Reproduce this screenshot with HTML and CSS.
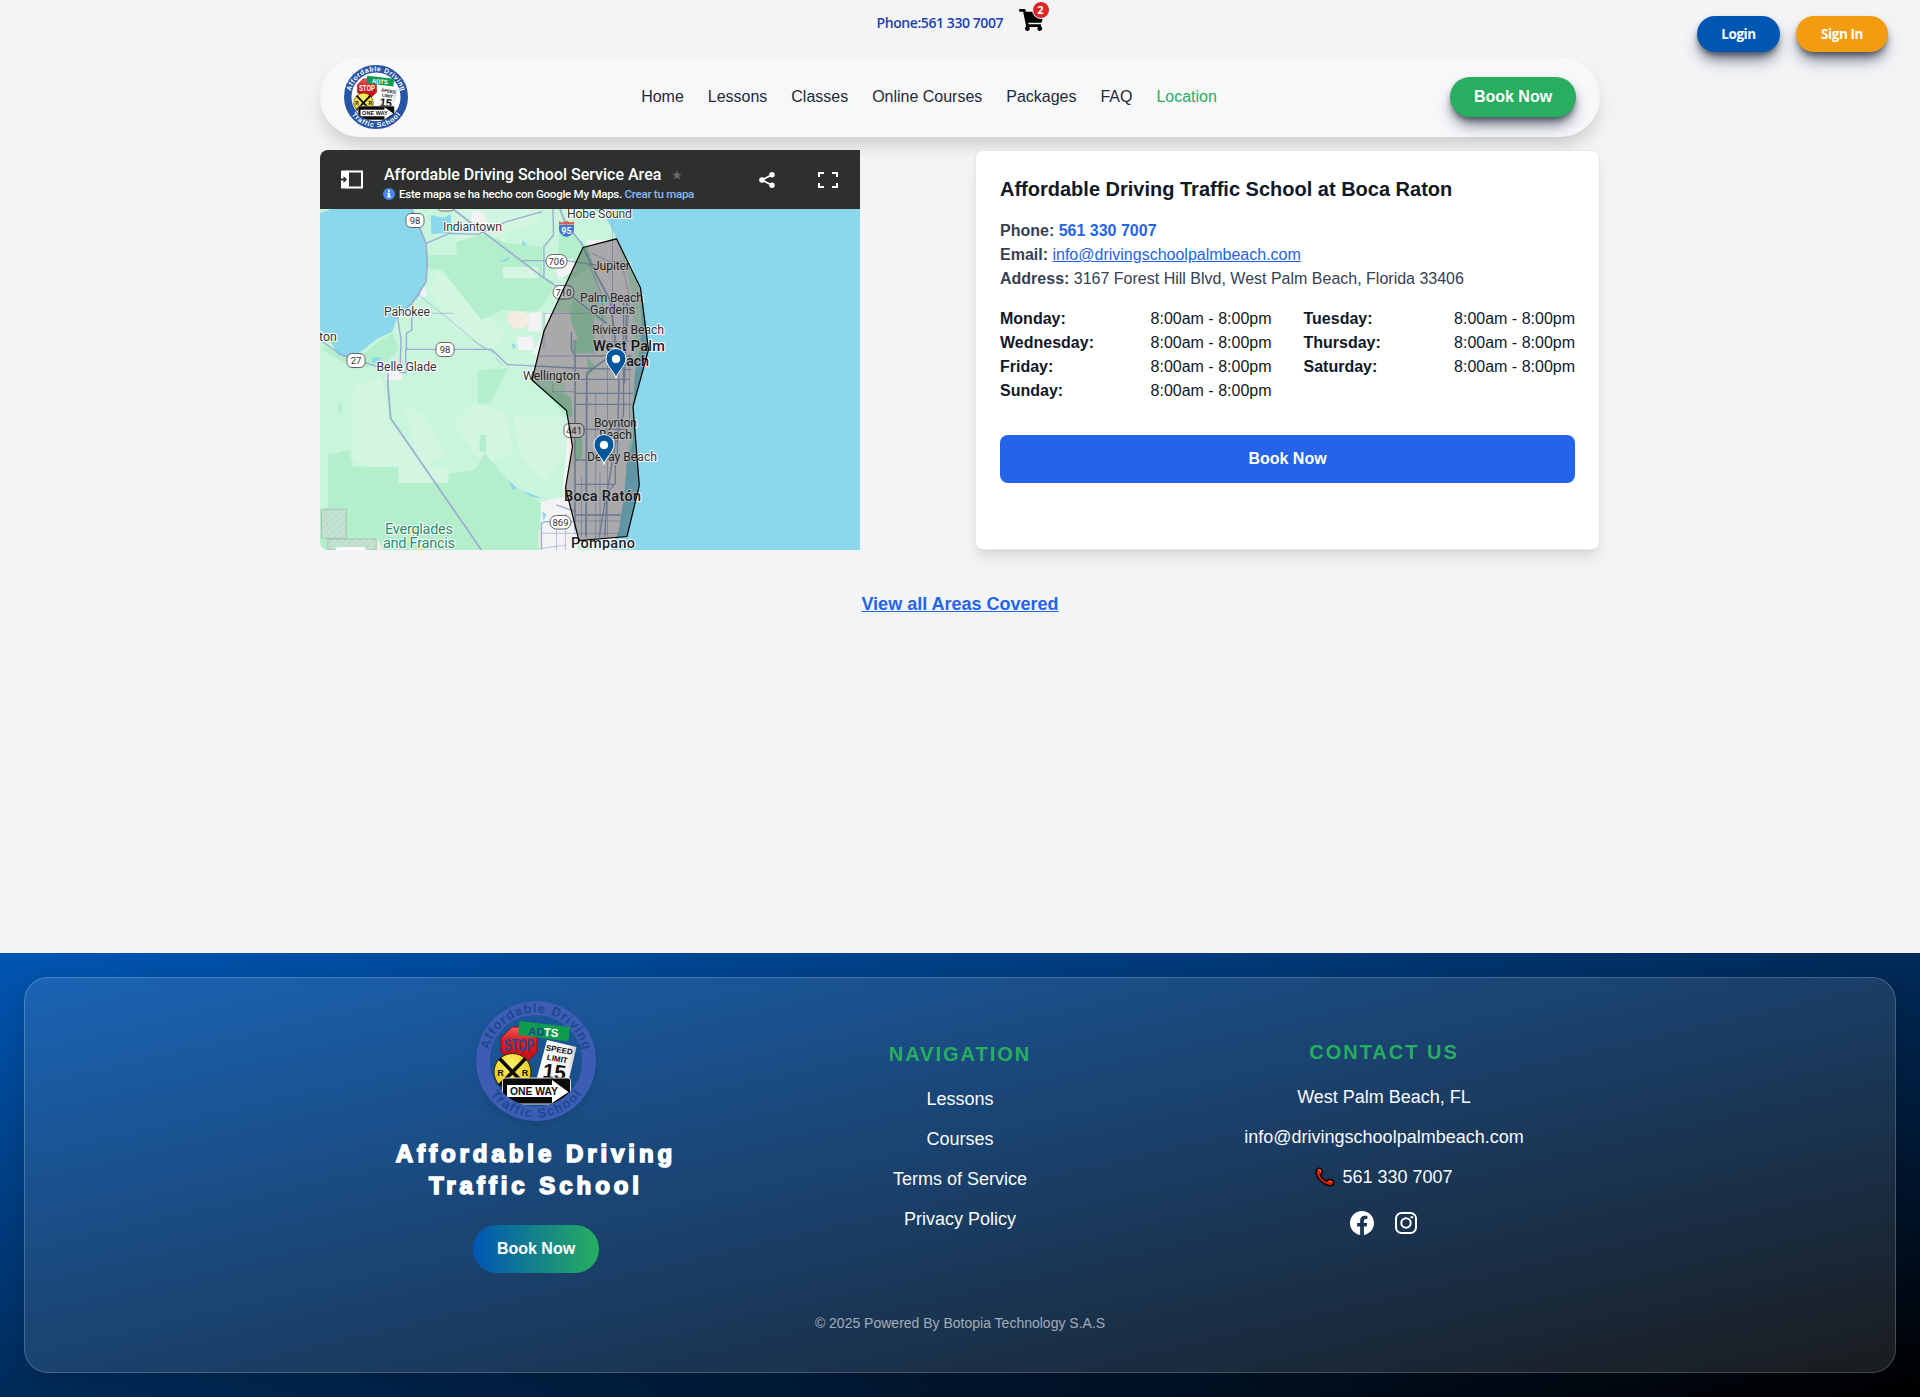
FILE: index.html
```html
<!DOCTYPE html>
<html lang="en">
<head>
<meta charset="utf-8">
<title>Affordable Driving Traffic School</title>
<link rel="stylesheet" href="styles.css">
</head>
<body>
<svg class="defs" aria-hidden="true">
  <defs>
    <linearGradient id="stopRed" x1="0" y1="0" x2="0" y2="1"><stop offset="0" stop-color="#f4585c"/><stop offset=".4" stop-color="#dc1a22"/><stop offset="1" stop-color="#b80f18"/></linearGradient>
    <linearGradient id="signWhite" x1="0" y1="0" x2="1" y2="0"><stop offset="0" stop-color="#fff"/><stop offset=".8" stop-color="#f3f3f3"/><stop offset="1" stop-color="#c9c9c9"/></linearGradient>
    <radialGradient id="rail" cx=".45" cy=".3" r=".8"><stop offset="0" stop-color="#fff36a"/><stop offset="1" stop-color="#e3bd00"/></radialGradient>
    <path id="arcTop" d="M11.500 60a48.500 48.500 0 0 1 97 0"/>
    <path id="arcBottom" d="M3.500 60a56.500 56.500 0 0 0 113 0"/>
    <symbol id="school" viewBox="0 0 120 120">
      <circle class="logo-face" cx="60" cy="60" r="48"/>
      <circle class="logo-ring" cx="60" cy="60" r="53" fill="none" stroke-width="14"/>
      <path d="M36 26h14l11 11v14l-11 11H36L25 51V37z" fill="url(#stopRed)" stroke="#8f1117"/>
      <text class="logo-stop" x="43" y="49.500" text-anchor="middle" textLength="30" lengthAdjust="spacingAndGlyphs">STOP</text>
      <path d="M43.500 20l50.500 6-1.500 14.500-50.500-6.500z" fill="#0f9b4e"/>
      <g class="logo-adts" transform="rotate(4 67 34)"><text class="logo-ad" x="52" y="35">AD</text><text x="67.500" y="35">TS</text></g>
      <path d="M71 39l29.500 7-9 38H59z" fill="url(#signWhite)"/>
      <g class="logo-speed"><text x="83" y="51.500" text-anchor="middle" transform="rotate(10 83 51)">SPEED</text><text x="81" y="60.500" text-anchor="middle" transform="rotate(10 81 60)">LIMIT</text><text class="logo-limit" x="77.500" y="78" text-anchor="middle" transform="rotate(7 77 78)">15</text></g>
      <circle cx="36.500" cy="71" r="18.500" fill="url(#rail)" stroke="#2a2508"/>
      <path d="M23.500 57.500l26 27M49.500 57.500l-26 27" stroke="#0c0c0c" stroke-width="3.600"/>
      <g class="logo-rr"><text x="24.500" y="74.500" text-anchor="middle">R</text><text x="49" y="74.500" text-anchor="middle">R</text></g>
      <path d="M29 77h63q2.500 0 2.500 2.500V97l-4.500 6H33l-6.500-6V79.500Q26.500 77 29 77z" fill="#0b0b0b" stroke="#ddd"/>
      <path d="M31 84h45v-5l16.500 12L76 102v-6H31z" fill="#fff"/>
      <text class="logo-oneway" x="34" y="93.800" textLength="48" lengthAdjust="spacingAndGlyphs">ONE WAY</text>
      <path d="M12 92a57 57 0 0 0 96 0l-9-8a46 46 0 0 1-78 0z" class="logo-band"/>
      <text class="logo-arc"><textPath href="#arcTop" startOffset="50%" text-anchor="middle" textLength="130">Affordable Driving</textPath></text>
      <text class="logo-arc"><textPath href="#arcBottom" startOffset="50%" text-anchor="middle" textLength="106">Traffic School</textPath></text>
    </symbol>
  </defs>
</svg>

<header class="topbar">
  <div class="topbar-center">
    <a class="topbar-phone">Phone:561 330 7007</a>
    <a class="cart">
      <svg viewBox="0 0 576 512" width="25" height="22"><path d="M528.120 301.320l47.270-208C578.810 78.310 567.390 64 552 64H159.210l-9.170-44.800C147.760 8.020 137.930 0 126.530 0H24C10.750 0 0 10.750 0 24v16c0 13.250 10.750 24 24 24h69.880l70.250 343.430C147.330 417.100 136 435.220 136 456c0 30.930 25.070 56 56 56s56-25.070 56-56c0-15.670-6.450-29.830-16.820-40h209.650C430.450 426.170 424 440.330 424 456c0 30.930 25.070 56 56 56s56-25.070 56-56c0-22.170-12.890-41.330-31.580-50.400l5.520-24.280c3.410-15.010-8-29.320-23.400-29.320H218.120l-6.540-32h293.140c11.200 0 20.920-7.750 23.400-18.680z"/></svg>
      <span class="cart-badge">2</span>
    </a>
  </div>
  <div class="topbar-auth">
    <button class="pill pill-blue">Login</button>
    <button class="pill pill-orange">Sign In</button>
  </div>
</header>

<nav class="navbar">
  <svg class="logo logo-small" width="64" height="64"><use href="#school"/></svg>
  <ul class="menu">
    <li>Home</li><li>Lessons</li><li>Classes</li><li>Online Courses</li><li>Packages</li><li>FAQ</li><li class="active">Location</li>
  </ul>
  <button class="book">Book Now</button>
</nav>

<main class="main">
  <div class="location">
    <section class="map">
      <div class="map-bar">
        <svg class="map-panel" width="22" height="19" viewBox="0 0 22 19"><path d="M0 1.500Q0 .5 1 .5h6v18H1q-1 0-1-1z" fill="#fff"/><path d="M7 1.500h14v16H7z" fill="none" stroke="#fff" stroke-width="2"/><path d="M0 8.500h2.500V6L6 9.500 2.500 13v-2.500H0z" fill="#2e302f"/></svg>
        <div class="map-heading">
          <div class="map-title">Affordable Driving School Service Area
            <svg width="10" height="10" viewBox="0 0 24 24"><path fill="#686a69" d="M12 17.800L19.400 23l-2.800-9 7.400-5.300h-9.100L12 0 9.100 8.700H0L7.400 14l-2.800 9z"/></svg>
          </div>
          <div class="map-note">
            <svg width="12" height="12" viewBox="0 0 12 12"><circle cx="6" cy="6" r="6" fill="#4688f1"/><path d="M5 2h2v1.700H5zM4.300 4.700H7v3.600h.8v1.200H4.200V8.300H5V5.900h-.7z" fill="#fff"/></svg>
            <span>Este mapa se ha hecho con Google My Maps. <a>Crear tu mapa</a></span>
          </div>
        </div>
        <svg class="map-share" width="16" height="16" viewBox="0 0 16 16"><path d="M13 2.800L3 8l10 5.200" fill="none" stroke="#fff" stroke-width="1.600"/><circle cx="13" cy="2.800" r="2.700" fill="#fff"/><circle cx="3" cy="8" r="2.800" fill="#fff"/><circle cx="13" cy="13.200" r="2.700" fill="#fff"/></svg>
        <svg width="20" height="16" viewBox="0 0 20 16"><path d="M1 5V1h5M14 1h5v4M19 11v4h-5M6 15H1v-4" fill="none" stroke="#fff" stroke-width="2"/></svg>
      </div>
      <svg class="map-canvas" width="540" height="341" viewBox="0 0 540 341">
        <defs><pattern id="hatch" width="20" height="20" patternUnits="userSpaceOnUse"><path d="M0 0h20v20H0z" fill="#c3e2d1"/><path d="M0 20L20 0" stroke="#a9cdb8" stroke-width="2"/></pattern></defs>
        <g transform="translate(-10 -69) scale(.35714 .33333)">
          <path class="land" d="M28 207h1512v1023H28z"/>
          <path class="pale" d="M410 207l230 0 0 40 -90 30 -20 70 -120 0zM360 390l190 190 -30 50 -110 -60 -80 -120zM120 740l80 -30 20 140 100 110 -80 60 -120 -60zM400 850l60 -60 90 30 20 120 -80 30 -50 -60zM570 830l140 0 10 100 -60 100 -70 -80zM260 790l60 40 60 110 -70 50z"/>
          <path class="forest" d="M330 345l80 0 0 -40 80 -25 60 30 100 10 0 90 35 15 -10 30 -35 60 -100 -5 -60 30 -110 -150 -45 -5zM700 260l70 50 25 65 -70 45 -30 -10 0 -80zM50 945l60 -15 10 50 130 0 -2 50 147 -30 65 -10 30 -50 70 90 85 60 0 140 -617 0 0 -120 22 -10zM470 690l85 -5 -50 105 -35 0zM35 630l0 -12 100 40 40 -40 55 -40 20 50 -40 40 -80 20zM475 885h18v50h-18zM80 788h10v32H80z"/>
          <path class="pale" d="M248 980h140v48H248zM540 380l100 0 0 35 -100 0z"/>
          <path class="town" d="M455 210l30 10 25 50 -35 10 -25 -30zM305 450l15 -10 8 25 -20 10zM612 520l35 -6 0 60 -35 0zM660 515l60 0 20 60 -60 50 -60 20 40 -80zM578 590l45 0 5 40 -45 0zM685 370l50 -15 10 35 -50 30zM648 1085l90 -20 10 165 -105 0zM213 690l45 0 0 30 -45 0z"/>
          <path class="town" d="M775 300l85 0 40 150 10 190 -5 120 -20 240 -15 230 -130 -20 -32 -165 12 -150 -8 -170 -90 -30 28 -120 40 -60 75 10 70 30 -20 -90z"/>
          <path class="sand" d="M555 520q45 -18 60 12 0 38 -40 34 -28 -14 -20 -46zM725 900l14 0 0 70 -14 20zM190 1195l15 35 -20 0zM640 1170l8 0 0 60 -8 -10z"/>
          <path class="forest" d="M735 480l60 50 0 110 -30 0 -35 -100zM735 600l60 0 0 40 -60 0zM650 740l80 30 6 60 -20 0zM740 870l22 10 0 70 -22 20zM775 650l25 30 -20 30z"/>
          <path class="water" d="M28 220L60 207H287l13 33 22 70 6 50-3 60-20 50-60 60-15 45-40 20-42 35-35 25-35-10-25-50-28-30zM338 225l35 8 22 -10 0 55 -55 5zM795 207l35 28 28 60 42 85 25 65 4 110 -7 85 -12 60 -5 100 0 100 -18 70 -8 100 -14 100 -22 60H1540V207zM595 300l12 15 -12 3zM530 365l30 -15 -8 14zM555 1020l25 25 -12 5zM590 1050l60 25 -30 -4zM565 610l12 8 -8 10zM650 1115l12 8 -8 20zM175 650l30 5 -30 15z"/>
          <path class="hatch-area" d="M32 1108h70v87H32zM50 1197h135v33H50z"/>
          <rect x="72" y="1222" width="84" height="16" rx="6" fill="#fff"/>
          <g class="road thin"><path d="M305 465L380 530 490 628M340 520h60M455 600l60 40M520 655l20 20M742 600V1185M800 760V1195M833 640V1190M847 240V600M865 640V780M895 640V850M650 520H830M655 520V625M680 730l0 25 60 0M640 648H740M790 605H910M745 1143H870M648 1180H870M648 1225l70 -10M690 1125V1230M715 1120V1230M780 370l40 100 0 130M790 340l60 30M870 360l25 110 -10 170M750 1125H870M760 1010V1190M812 1000V1195"/></g>
          <g class="road mid"><path d="M325 310L390 280l80 3 80 -38 100 -30M680 207l2 78 -27 35 0 90M595 362l125 0 140 23M245 530l10 70 -3 98 16 0 0 -70 240 0 45 46 187 10 160 5M285 490l0 80 -15 10 0 48M28 600l60 45 100 35M742 648H900M742 718H895M742 760H905M742 793H900M742 868H890M742 960H790M742 1033H850M742 1125H870M648 1230V1150l10 -5H745M732 575V630l10 15V1170M878 470V820L855 910 833 1050 825 1190M690 1095l55 20M855 975V1030l-25 30 -20 130M865 720l-5 250"/></g>
          <g class="road"><path d="M285 207l40 103 3 60 -3 55 -40 65 -40 40M218 700l0 35 8 100L480 1230M400 207L490 280 650 410 740 475 830 550M700 207l15 43 45 60 40 90 40 80 15 120 -5 40 -75 60 -2 490M888 480l-8 250"/></g>
        </g>
        <g class="labels">
          <g class="shield">
            <rect x="86" y="4.500" width="18" height="14" rx="5"/><rect x="117" y="-11" width="18" height="13" rx="5"/><rect x="226" y="45.500" width="21" height="13.500" rx="6.500"/><rect x="233" y="76.500" width="21" height="13.500" rx="6.500"/><rect x="116" y="133.500" width="18" height="14" rx="5"/><rect x="27" y="144.500" width="18" height="14" rx="5"/><rect x="244" y="214.500" width="20" height="14" rx="5"/><rect x="230" y="306.500" width="21" height="13.500" rx="6.500"/>
          </g>
          <g class="shield-text"><text x="95" y="15.300">98</text><text x="236.500" y="56">706</text><text x="243.500" y="87">710</text><text x="125" y="144.300">98</text><text x="36" y="155.300">27</text><text x="254" y="225.300">441</text><text x="240.500" y="317">869</text></g>
          <path d="M239 16h15v4q0 6-7.500 8-7.500-2-7.500-8z" fill="#3b76cf"/><path d="M239 15.500v-3l3 1 4.500-1.500 4.500 1.500 3-1v3z" fill="#d95a54"/><text class="interstate" x="246.500" y="24.500">95</text>
          <g class="place">
            <text x="247" y="8.500" textLength="65">Hobe Sound</text><text x="123" y="21.500" textLength="59">Indiantown</text><text x="64" y="106.500" textLength="46">Pahokee</text><text x="-1" y="132">ton</text><text x="56.500" y="161.500" textLength="60">Belle Glade</text><text x="273" y="60.500" textLength="37">Jupiter</text><text x="260" y="92.500" textLength="63">Palm Beach</text><text x="270" y="104.500" textLength="45">Gardens</text><text x="272" y="124.500" textLength="72">Riviera Beach</text><text x="203" y="170.500" textLength="57">Wellington</text><text x="274" y="217.500" textLength="43">Boynton</text><text x="279" y="229.500" textLength="33">Beach</text><text x="267" y="251.500" textLength="70">Delray Beach</text>
          </g>
          <g class="city"><text x="273" y="142" textLength="72">West Palm</text><text x="290" y="157" textLength="39">Beach</text><text x="244" y="291.500" textLength="77">Boca Ratón</text><text x="251" y="339" textLength="64">Pompano</text></g>
          <g class="park"><text x="65" y="324.500" textLength="68">Everglades</text><text x="63" y="338.500" textLength="72">and Francis</text></g>
        </g>
        <path class="zone" d="M263 38.500l33.500 -8.700 24 49 8 62L313 197.500l6.300 79L307 327.500l-48 4L245.500 279l7 -41.500 -6 -36L212 171l12 -49z"/>
        <g class="pin"><path d="M296 169.500c-1-7-10-12-10-20a10 10 0 0 1 20 0c0 8-9 13-10 20z"/><circle cx="296" cy="150" r="3.800"/><path d="M284 255.500c-1-7-10-12-10-20a10 10 0 0 1 20 0c0 8-9 13-10 20z"/><circle cx="284" cy="236" r="3.800"/></g>
      </svg>
    </section>

    <section class="card">
      <h2>Affordable Driving Traffic School at Boca Raton</h2>
      <div class="contact">
        <p><b>Phone:</b> <a class="tel">561 330 7007</a></p>
        <p><b>Email:</b> <a class="mail">info@drivingschoolpalmbeach.com</a></p>
        <p><b>Address:</b> 3167 Forest Hill Blvd, West Palm Beach, Florida 33406</p>
      </div>
      <div class="hours">
        <div><b>Monday:</b><span>8:00am - 8:00pm</span></div><div><b>Tuesday:</b><span>8:00am - 8:00pm</span></div>
        <div><b>Wednesday:</b><span>8:00am - 8:00pm</span></div><div><b>Thursday:</b><span>8:00am - 8:00pm</span></div>
        <div><b>Friday:</b><span>8:00am - 8:00pm</span></div><div><b>Saturday:</b><span>8:00am - 8:00pm</span></div>
        <div><b>Sunday:</b><span>8:00am - 8:00pm</span></div>
      </div>
      <button class="card-book">Book Now</button>
    </section>
  </div>
  <a class="areas">View all Areas Covered</a>
</main>

<footer class="footer">
  <div class="panel">
    <div class="columns">
      <div class="brand">
        <svg class="logo logo-large" width="120" height="120"><use href="#school"/></svg>
        <h3>Affordable Driving<br>Traffic School</h3>
        <button class="brand-book">Book Now</button>
      </div>
      <div class="links">
        <h4>NAVIGATION</h4>
        <a>Lessons</a><a>Courses</a><a>Terms of Service</a><a>Privacy Policy</a>
      </div>
      <div class="links links-contact">
        <h4>CONTACT US</h4>
        <a>West Palm Beach, FL</a><a>info@drivingschoolpalmbeach.com</a>
        <a class="footer-phone"><svg width="20" height="20" viewBox="0 0 20 20"><path d="M2.200 1.700Q4 .6 6 1.800L7.400 5.500Q7 7.300 5.400 8q1.500 4 6.500 6.200 1.300-2 3-2l3.600 1.700q.9 1.600-.5 4-4.200 2-9.400-1.400Q.7 11 1 4.500z" fill="#d81e12" stroke="#080808" stroke-width="1.500"/><path d="M3.500 3.200l1.700-.2.600 2M13.800 14.200l2.600.8" fill="none" stroke="#ff6a35" stroke-width="1.300"/></svg>561 330 7007</a>
        <div class="social">
          <svg width="24" height="24" viewBox="0 0 24 24"><path fill="#fff" d="M24 12.070C24 5.400 18.630 0 12 0S0 5.400 0 12.070C0 18.100 4.390 23.090 10.130 24v-8.440H7.080v-3.490h3.050V9.410c0-3.020 1.790-4.690 4.530-4.690 1.310 0 2.690.24 2.690.24v2.970h-1.520c-1.490 0-1.960.93-1.960 1.890v2.250h3.330l-.53 3.490h-2.800V24C19.610 23.090 24 18.100 24 12.070z"/></svg>
          <svg width="22" height="22" viewBox="0 0 22 22" fill="none" stroke="#fff" stroke-width="2"><rect x="1" y="1" width="20" height="20" rx="5.500"/><circle cx="11" cy="11" r="4.700"/><circle cx="16.800" cy="5.200" r="1.300" fill="#fff" stroke="none"/></svg>
        </div>
      </div>
    </div>
    <p class="copyright">© 2025 Powered By Botopia Technology S.A.S</p>
  </div>
</footer>
</body>
</html>
```
FILE: styles.css
```css
* { box-sizing: border-box; margin: 0; padding: 0; }
body { background: #f3f4f6; color: #111827; font: 16px/24px "Liberation Sans", Arial, sans-serif; min-height: 1397px; display: flex; flex-direction: column; }
button { border: 0; font: inherit; font-weight: 700; color: #fff; }
svg { display: block; flex: none; }
.defs { position: absolute; width: 0; height: 0; }

.topbar { height: 57px; display: grid; grid-template-columns: 1fr auto 1fr; padding: 0 32px; }
.topbar-center { grid-column: 2; display: flex; gap: 16px; align-items: flex-start; }
.topbar-phone { width: 126px; padding-top: 13px; font: 600 14px/20px "Open Sans", "Noto Sans", sans-serif; letter-spacing: -.42px; white-space: nowrap; color: #1e40af; }
.cart { position: relative; padding-top: 9px; width: 25px; }
.cart-badge { position: absolute; left: 13px; top: 1px; width: 18px; height: 18px; border-radius: 50%; border: 1px solid #fff; background: #dc2626; color: #fff; font: 700 11px/16px "Open Sans", sans-serif; text-align: center; }
.topbar-auth { display: flex; justify-content: flex-end; gap: 16px; padding-top: 16px; }
.pill { height: 36px; border-radius: 18px; font: 700 13.500px/36px "Open Sans", "Noto Sans", sans-serif; letter-spacing: -.45px; }
.pill, .book { box-shadow: 0 10px 15px -3px rgba(31, 41, 65, .65), 0 4px 6px -2px rgba(31, 41, 55, .65); }
.pill-blue { width: 83px; background: #0056b3; }
.pill-orange { width: 92px; background: #f39c12; }

.navbar { width: 1280px; height: 80px; margin: 0 auto; padding: 0 24px; display: flex; align-items: center; justify-content: space-between; border-radius: 40px; background: #f7f8fa; box-shadow: 0 10px 15px -3px rgba(0, 0, 0, .12), 0 10px 24px rgba(0, 0, 0, .05); }
.menu { display: flex; gap: 24px; list-style: none; color: #1f2937; letter-spacing: -.01px; }
.menu .active { color: #27ae60; }
.book { width: 126px; height: 40px; border-radius: 20px; background: #27ae60; }

.logo-arc { font: 700 13px "Liberation Sans", Arial, sans-serif; fill: var(--arc); }
.logo-ring { stroke: var(--ring); }
.logo-band { fill: var(--ring); }
.logo-face { fill: var(--face); }
.logo-stop { font: 700 16px "Liberation Sans", Arial, sans-serif; fill: var(--stop); }
.logo-adts { font: 700 11.500px "Liberation Sans", Arial, sans-serif; fill: #fff; }
.logo-ad { fill: var(--stop); }
.logo-speed { font: 700 8px "Liberation Sans", Arial, sans-serif; fill: #111; }
.logo-limit { font-size: 21px; }
.logo-rr { font: 700 9px "Liberation Sans", Arial, sans-serif; fill: #111; }
.logo-oneway { font: 700 10px "Liberation Sans", Arial, sans-serif; fill: #111; }
.logo-small { --arc: #fff; --ring: #2754a3; --face: #fff; --stop: #fff; }
.logo-large { --arc: #1b4a8f; --ring: #3d5db5; --face: transparent; --stop: #1d4b91; border-radius: 50%; box-shadow: 0 4px 10px rgba(0, 0, 0, .1); }

.main { flex: 1; width: 1280px; margin: 13px auto 0; display: flex; flex-direction: column; align-items: center; gap: 40px; }
.location { width: 100%; display: flex; justify-content: space-between; }
.map { width: 540px; height: 400px; border-radius: 8px 0 0 8px; overflow: hidden; }
.map-bar { height: 59px; background: #2e302f; display: flex; align-items: center; padding: 0 22px 0 21px; color: #fff; font-family: Roboto, sans-serif; }
.map-heading { margin-left: 20px; flex: 1; padding-top: 8px; }
.map-title { display: flex; align-items: center; gap: 11px; padding-left: 1px; font: 500 16px/20px Roboto, sans-serif; white-space: nowrap; }
.map-note { display: flex; align-items: center; gap: 4px; font: 500 11.500px/18px Roboto, sans-serif; letter-spacing: -.25px; white-space: nowrap; }
.map-note a { color: #8ab8f8; }
.map-share { margin-right: 43px; }
.land { fill: #c9f5dc; }
.pale { fill: #d2f6e2; }
.forest { fill: #b3efcb; }
.town { fill: #f3f3f6; }
.sand { fill: #f3ecdf; }
.water { fill: #8bd8ec; }
.hatch-area { fill: url(#hatch); stroke: #9fb9ab; stroke-width: 2; }
.road { fill: none; stroke: #9cadd0; stroke-width: 5; stroke-linejoin: round; }
.road.mid { stroke-width: 4; }
.road.thin { stroke-width: 2; }
.labels { font-family: Roboto, sans-serif; }
.place, .city, .park { paint-order: stroke; stroke: #fff; stroke-width: 2px; stroke-linejoin: round; fill: #333; }
.place { font-size: 12.300px; }
.city { font-size: 14.500px; font-weight: 500; fill: #202124; }
.park { font-size: 14.500px; fill: #258a65; }
.shield { fill: #fff; stroke: #666; }
.shield-text { font-size: 9.500px; fill: #333; text-anchor: middle; }
.interstate { font-size: 9px; font-weight: 700; fill: #fff; text-anchor: middle; }
.zone { fill: rgba(0, 0, 0, .3); stroke: #000; stroke-width: 1.200; }
.pin { fill: #01579b; stroke: #fff; stroke-width: 1; }
.pin circle { fill: #fff; }

.card { width: 625px; height: 400px; padding: 24px; border: 1px solid #e5e7eb; border-radius: 8px; background: #fff; box-shadow: 0 10px 15px -3px rgba(0, 0, 0, .1), 0 4px 6px -2px rgba(0, 0, 0, .05); }
.card h2 { font-size: 20px; line-height: 28px; margin-bottom: 16px; }
.contact { color: #374151; margin-bottom: 16px; }
.contact a { color: #2563eb; }
.tel { font-weight: 700; }
.mail { text-decoration: underline; }
.hours { display: grid; grid-template-columns: 1fr 1fr; column-gap: 32px; margin-bottom: 32px; }
.hours div { display: flex; justify-content: space-between; }
.card-book { width: 100%; height: 48px; border-radius: 8px; background: #2563eb; }
.areas { font-size: 18px; line-height: 28px; font-weight: 700; color: #2563eb; text-decoration: underline; }

.footer { height: 444px; padding: 24px; background: linear-gradient(to bottom right, #0056b3, #000); }
.panel { height: 396px; padding: 23px 0 0; border: 1px solid rgba(255, 255, 255, .2); border-radius: 24px; background: rgba(255, 255, 255, .1); box-shadow: 0 8px 24px rgba(0, 0, 0, .15); display: flex; flex-direction: column; align-items: center; color: #f9fafb; }
.columns { width: 1232px; height: 312px; display: grid; grid-template-columns: repeat(3, 1fr); gap: 40px; text-align: center; }
.brand { display: flex; flex-direction: column; align-items: center; }
.brand h3 { margin: 17px 0 23px; font-size: 24px; line-height: 32px; letter-spacing: 3.950px; color: #fff; -webkit-text-stroke: 1.600px #fff; }
.brand-book { width: 126px; height: 48px; border-radius: 24px; background: linear-gradient(to right, #0056b3, #27ae60); }
.links { display: flex; flex-direction: column; align-items: center; padding-top: 39px; font-size: 18px; line-height: 28px; gap: 12px; }
.links h4 { font-size: 20px; letter-spacing: 2px; color: #27ae60; margin-bottom: 5px; }
.links-contact { padding-top: 37px; }
.footer-phone { display: flex; align-items: center; gap: 7px; }
.social { display: flex; align-items: center; gap: 21px; margin: 8px 2px 0 0; }
.copyright { font-size: 14px; line-height: 20px; color: rgba(255, 255, 255, .6); }
```
